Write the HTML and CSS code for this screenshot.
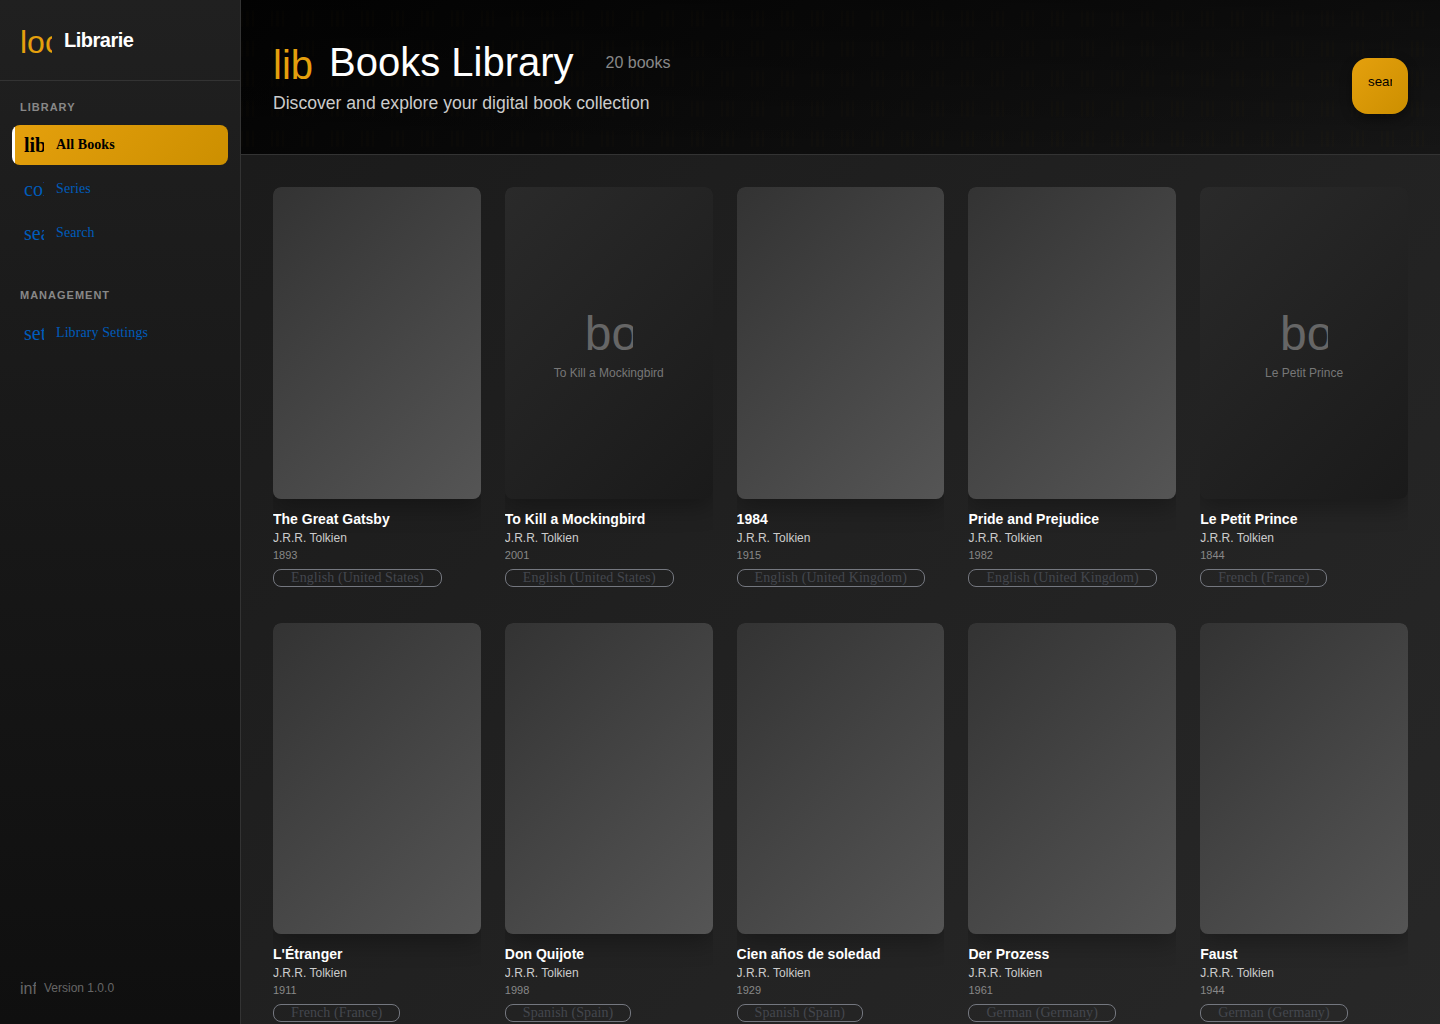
FILE: index.html
```html
<!DOCTYPE html>
<html lang="en">
<head>
<meta charset="utf-8">
<title>Librarie</title>
<link rel="stylesheet" href="styles.css">
</head>
<body>
<div class="app">
  <aside class="sidebar">
    <div class="brand"><span class="icon brand-icon">local_library</span><span class="brand-name">Librarie</span></div>
    <nav class="nav">
      <h3 class="nav-title">Library</h3>
      <a class="nav-item active"><span class="icon nav-icon">library_books</span><span>All Books</span></a>
      <a class="nav-item"><span class="icon nav-icon">collections</span><span>Series</span></a>
      <a class="nav-item"><span class="icon nav-icon">search</span><span>Search</span></a>
      <h3 class="nav-title second">Management</h3>
      <a class="nav-item"><span class="icon nav-icon">settings</span><span>Library Settings</span></a>
    </nav>
    <div class="version"><span class="icon version-icon">info</span><span>Version 1.0.0</span></div>
  </aside>
  <main class="main">
    <header class="header">
      <div>
        <div class="title-row"><span class="icon title-icon">library_books</span><h1 class="title">Books Library</h1><span class="count">20 books</span></div>
        <p class="subtitle">Discover and explore your digital book collection</p>
      </div>
      <button class="search-button"><span class="icon search-icon">search</span></button>
    </header>
    <section class="grid">
      <article class="book"><div class="cover"></div><h2 class="name">The Great Gatsby</h2><p class="author">J.R.R. Tolkien</p><p class="year">1893</p><span class="chip">English (United States)</span></article>
      <article class="book"><div class="cover missing"><span class="icon cover-icon">book</span><span class="cover-title">To Kill a Mockingbird</span></div><h2 class="name">To Kill a Mockingbird</h2><p class="author">J.R.R. Tolkien</p><p class="year">2001</p><span class="chip">English (United States)</span></article>
      <article class="book"><div class="cover"></div><h2 class="name">1984</h2><p class="author">J.R.R. Tolkien</p><p class="year">1915</p><span class="chip">English (United Kingdom)</span></article>
      <article class="book"><div class="cover"></div><h2 class="name">Pride and Prejudice</h2><p class="author">J.R.R. Tolkien</p><p class="year">1982</p><span class="chip">English (United Kingdom)</span></article>
      <article class="book"><div class="cover missing"><span class="icon cover-icon">book</span><span class="cover-title">Le Petit Prince</span></div><h2 class="name">Le Petit Prince</h2><p class="author">J.R.R. Tolkien</p><p class="year">1844</p><span class="chip">French (France)</span></article>
      <article class="book"><div class="cover"></div><h2 class="name">L'Étranger</h2><p class="author">J.R.R. Tolkien</p><p class="year">1911</p><span class="chip">French (France)</span></article>
      <article class="book"><div class="cover"></div><h2 class="name">Don Quijote</h2><p class="author">J.R.R. Tolkien</p><p class="year">1998</p><span class="chip">Spanish (Spain)</span></article>
      <article class="book"><div class="cover"></div><h2 class="name">Cien años de soledad</h2><p class="author">J.R.R. Tolkien</p><p class="year">1929</p><span class="chip">Spanish (Spain)</span></article>
      <article class="book"><div class="cover"></div><h2 class="name">Der Prozess</h2><p class="author">J.R.R. Tolkien</p><p class="year">1961</p><span class="chip">German (Germany)</span></article>
      <article class="book"><div class="cover"></div><h2 class="name">Faust</h2><p class="author">J.R.R. Tolkien</p><p class="year">1944</p><span class="chip">German (Germany)</span></article>
    </section>
  </main>
</div>
</body>
</html>
```

FILE: styles.css
```css
* { box-sizing: border-box; }
body { margin: 0; overflow: hidden; background: #1a1a1a; font-family: "Liberation Sans", Arial, sans-serif; color: #fff; }
h1, h2, h3, p { margin: 0; }
.app { display: flex; height: 1024px; overflow: hidden; }
.icon { display: block; flex: none; overflow: hidden; white-space: nowrap; line-height: 1; }

.sidebar { display: flex; flex-direction: column; flex: none; width: 241px; border-right: 1px solid #333; background: linear-gradient(180deg, #202020 0%, #0f0f0f 100%); }
.brand { display: flex; align-items: center; gap: 12px; height: 81px; padding: 0 20px; border-bottom: 1px solid #333; }
.brand-icon { width: 32px; height: 36px; font-size: 32px; line-height: 40px; color: #e5a00d; }
.brand-name { font-size: 20px; font-weight: 700; letter-spacing: -0.5px; }
.nav { flex: 1; padding: 20px 12px; }
.nav-title { padding: 0 8px; font-size: 11px; line-height: 13px; font-weight: 600; letter-spacing: 1px; text-transform: uppercase; color: #888; margin-bottom: 11px; }
.nav-title.second { margin-top: 36px; }
.nav-item { display: flex; align-items: center; gap: 12px; height: 40px; padding: 0 12px; margin-bottom: 4px; border-radius: 8px; font-family: "Liberation Serif", "Times New Roman", serif; font-size: 14px; font-weight: 500; letter-spacing: 0.09px; color: #005cbb; }
.nav-item.active { background: linear-gradient(90deg, #fff 3px, transparent 3px), linear-gradient(135deg, #e5a00d, #cc8f00); color: #000; font-weight: 600; }
.nav-icon { width: 20px; height: 20px; font-size: 20px; letter-spacing: 0; }
.version { display: flex; align-items: center; gap: 8px; height: 72px; padding: 0 20px; font-size: 12px; color: #666; }
.version-icon { width: 16px; height: 18px; font-size: 16px; line-height: 20px; }

.main { flex: 1; min-width: 0; background: linear-gradient(135deg, #1a1a1a, #2a2a2a) 0 0 / 100% 1400px no-repeat; }
.header { position: relative; display: flex; justify-content: space-between; height: 155px; padding: 38px 32px 0; border-bottom: 1px solid #333; background: linear-gradient(180deg, rgba(0,0,0,.4), transparent), linear-gradient(135deg, #030303, #161616); }
/* Faint rows of book spines */
.header::before { content: ""; position: absolute; inset: 0; opacity: .01;
  background: repeating-linear-gradient(90deg, #e5a00d 0 2px, transparent 2px 5px, #e5a00d 5px 8px, transparent 8px 11px, #e5a00d 11px 13px, transparent 13px 30px);
  mask-image: repeating-linear-gradient(180deg, transparent 0 9px, #000 12px 26px, transparent 28px 30px);
}
.title-row { display: flex; align-items: center; height: 48px; }
.title-icon { width: 40px; height: 40px; font-size: 40px; color: #e5a00d; margin: 5px 16px 0 0; }
.title { font-size: 40px; font-weight: 400; line-height: 48px; }
.count { margin: 2px 0 0 32px; font-size: 16px; color: #888; }
.subtitle { margin-top: 6px; font-size: 17.6px; line-height: 22px; color: #ccc; }
.search-button { display: flex; justify-content: center; width: 56px; height: 56px; margin-top: 20px; padding: 16px 0 0; border: 0; border-radius: 16px; background: linear-gradient(135deg, #e5a00d, #cc8f00); box-shadow: 0 4px 12px rgba(0,0,0,.4); color: #000; }
.search-icon { width: 24px; height: 24px; font-family: "Liberation Sans", Arial, sans-serif; font-size: 13.333px; line-height: 15px; text-align: left; }

.grid { display: grid; grid-template-columns: repeat(5, minmax(0, 1fr)); gap: 36px 24px; padding: 32px; }
.book { min-width: 0; height: 399.7px; overflow: hidden; border-radius: 8px 8px 0 0; }
.cover { aspect-ratio: 2 / 3; border-radius: 8px; background: linear-gradient(135deg, #333, #555); box-shadow: 0 8px 24px rgba(0,0,0,.3); }
.cover.missing { display: flex; flex-direction: column; align-items: center; justify-content: center; gap: 7px; padding-top: 7px; background: linear-gradient(135deg, #2a2a2a, #1a1a1a); color: #666; }
.cover-icon { width: 48px; height: 48px; font-size: 48px; }
.cover-title { font-size: 12px; line-height: 17px; color: #777; }
.name { margin-top: 11px; font-size: 14px; line-height: 18px; font-weight: 600; white-space: nowrap; }
.author { margin-top: 2px; font-size: 12px; line-height: 16px; color: #ccc; }
.year { margin-top: 2px; font-size: 11px; line-height: 15px; color: #888; }
.chip { display: block; width: fit-content; height: 18px; margin-top: 6px; padding: 0 17px; border: 1px solid #74777f; border-radius: 8px; font-family: "Liberation Serif", "Times New Roman", serif; font-size: 14px; line-height: 16px; letter-spacing: 0.096px; color: #44474e; white-space: nowrap; }
```
